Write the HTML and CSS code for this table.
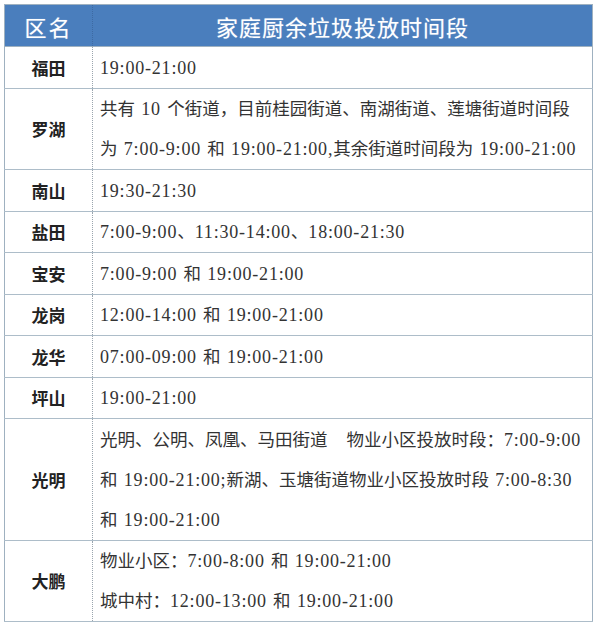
FILE: index.html
```html
<!DOCTYPE html>
<html lang="zh">
<head>
<meta charset="utf-8">
<link rel="stylesheet" href="styles.css">
</head>
<body>
<table class="sched">
  <thead>
    <tr><th class="h-name">区名</th><th class="h-time">家庭厨余垃圾投放时间段</th></tr>
  </thead>
  <tbody>
    <tr><td class="name">福田</td><td class="time"><span class="t">19:00-21:00</span></td></tr>
    <tr><td class="name">罗湖</td><td class="time">共有<span class="t"> 10 </span>个街道，目前桂园街道、南湖街道、莲塘街道时间段<br>为<span class="t"> 7:00-9:00 </span>和<span class="t"> 19:00-21:00,</span>其余街道时间段为<span class="t"> 19:00-21:00</span></td></tr>
    <tr><td class="name">南山</td><td class="time"><span class="t">19:30-21:30</span></td></tr>
    <tr><td class="name">盐田</td><td class="time"><span class="t">7:00-9:00</span>、<span class="t">11:30-14:00</span>、<span class="t">18:00-21:30</span></td></tr>
    <tr><td class="name">宝安</td><td class="time"><span class="t">7:00-9:00 </span>和<span class="t"> 19:00-21:00</span></td></tr>
    <tr><td class="name">龙岗</td><td class="time"><span class="t">12:00-14:00 </span>和<span class="t"> 19:00-21:00</span></td></tr>
    <tr><td class="name">龙华</td><td class="time"><span class="t">07:00-09:00 </span>和<span class="t"> 19:00-21:00</span></td></tr>
    <tr><td class="name">坪山</td><td class="time"><span class="t">19:00-21:00</span></td></tr>
    <tr><td class="name">光明</td><td class="time">光明、公明、凤凰、马田街道<span class="t">&nbsp;&nbsp;&nbsp;</span>物业小区投放时段：<span class="t">7:00-9:00</span><br>和<span class="t"> 19:00-21:00;</span>新湖、玉塘街道物业小区投放时段<span class="t"> 7:00-8:30</span><br>和<span class="t"> 19:00-21:00</span></td></tr>
    <tr><td class="name">大鹏</td><td class="time">物业小区：<span class="t">7:00-8:00 </span>和<span class="t"> 19:00-21:00</span><br>城中村：<span class="t">12:00-13:00 </span>和<span class="t"> 19:00-21:00</span></td></tr>
  </tbody>
</table>
</body>
</html>
```
FILE: styles.css
```css
html, body {
  margin: 0;
  padding: 0;
  background: #ffffff;
}
body {
  padding: 4px 0 0 4px;
}
.sched {
  border-collapse: collapse;
  width: 589px;
  table-layout: fixed;
  border: 1px solid #9fb1c0;
  font-family: "Liberation Serif", "Noto Sans CJK SC", serif;
}
.sched thead th {
  background: #4a7ebd;
  color: #ffffff;
  font-family: "Liberation Serif", "Noto Sans CJK SC", serif;
  font-weight: 400;
  font-size: 22px;
  height: 41px;
  padding: 0;
  text-shadow: 0 0 1px rgba(255,255,255,0.5);
  border-bottom: 1px solid #9fb1c0;
}
.sched .h-name {
  width: 87px;
  letter-spacing: 2px;
  border-right: 1px dotted #3d6aa3;
}
.sched .h-time {
  letter-spacing: 1px;
}
.sched td {
  border-bottom: 1px solid #adbdc9;
  padding: 0.5px 0 0 0;
  line-height: 40px;
  vertical-align: middle;
}
.sched .name {
  text-align: center;
  font-family: "Noto Sans CJK SC", sans-serif;
  font-weight: 700;
  font-size: 17px;
  color: #222222;
  border-right: 1px dotted #9aa5ae;
}
.sched .time {
  padding-left: 7px;
  font-size: 17.5px;
  color: #333333;
  white-space: nowrap;
}
.sched .t {
  font-size: 18px;
  letter-spacing: 0.8px;
  word-spacing: 1px;
}
```
